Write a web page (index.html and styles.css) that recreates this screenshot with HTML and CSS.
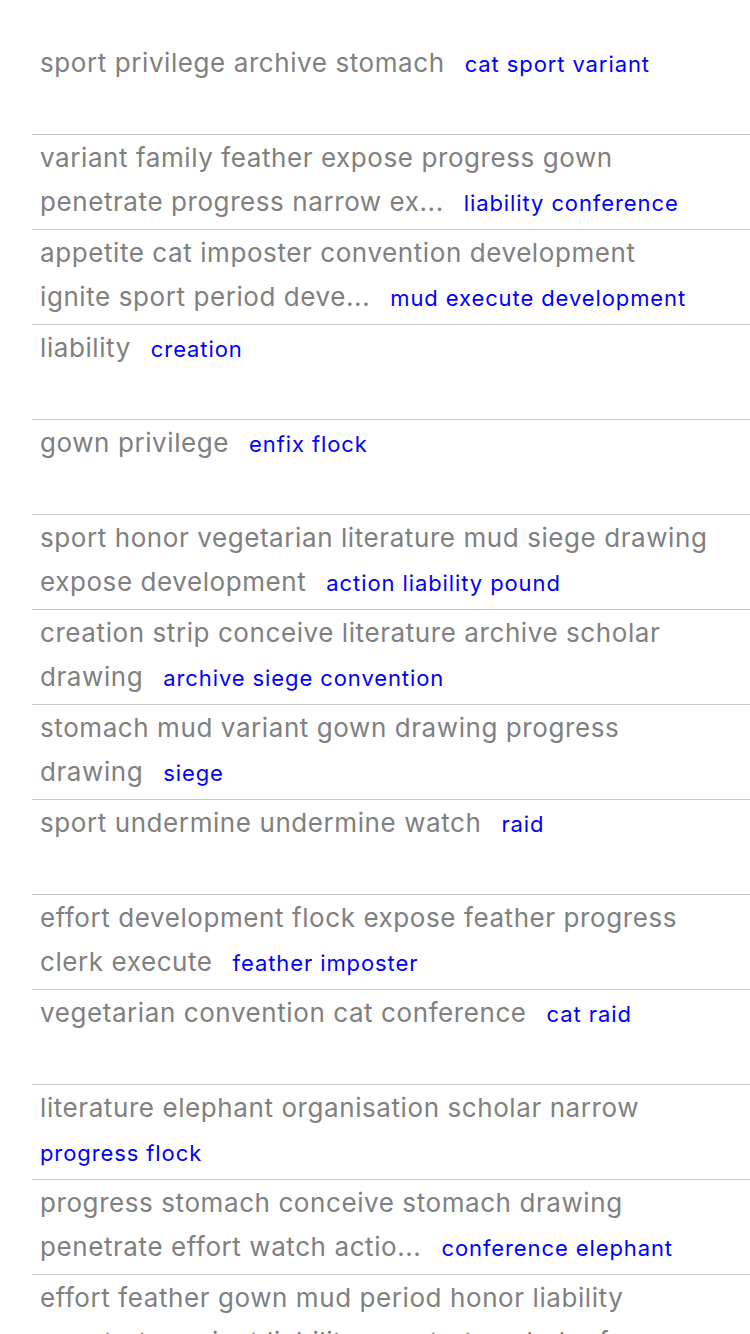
FILE: index.html
```html
<!DOCTYPE html>
<html>
<head>
<meta charset="utf-8">
<link rel="stylesheet" href="styles.css">
</head>
<body>
<ul class="list">
  <li class="row"><p class="text"><span class="title">sport privilege archive stomach</span><span class="tag">cat sport variant</span></p></li>
  <li class="row"><p class="text"><span class="title">variant family feather expose progress gown penetrate progress narrow ex...</span><span class="tag">liability conference</span></p></li>
  <li class="row"><p class="text"><span class="title">appetite cat imposter convention development ignite sport period deve...</span><span class="tag">mud execute development</span></p></li>
  <li class="row"><p class="text"><span class="title">liability</span><span class="tag">creation</span></p></li>
  <li class="row"><p class="text"><span class="title">gown privilege</span><span class="tag">enfix flock</span></p></li>
  <li class="row"><p class="text"><span class="title">sport honor vegetarian literature mud siege drawing expose development</span><span class="tag">action liability pound</span></p></li>
  <li class="row"><p class="text"><span class="title">creation strip conceive literature archive scholar drawing</span><span class="tag">archive siege convention</span></p></li>
  <li class="row"><p class="text"><span class="title">stomach mud variant gown drawing progress drawing</span><span class="tag">siege</span></p></li>
  <li class="row"><p class="text"><span class="title">sport undermine undermine watch</span><span class="tag">raid</span></p></li>
  <li class="row"><p class="text"><span class="title">effort development flock expose feather progress clerk execute</span><span class="tag">feather imposter</span></p></li>
  <li class="row"><p class="text"><span class="title">vegetarian convention cat conference</span><span class="tag">cat raid</span></p></li>
  <li class="row"><p class="text"><span class="title">literature elephant organisation scholar narrow</span><span class="tag">progress flock</span></p></li>
  <li class="row"><p class="text"><span class="title">progress stomach conceive stomach drawing penetrate effort watch actio...</span><span class="tag">conference elephant</span></p></li>
  <li class="row"><p class="text"><span class="title">effort feather gown mud period honor liability penetrate variant liability penetrate scholar fe...</span><span class="tag">mud</span></p></li>
</ul>
</body>
</html>
```

FILE: styles.css
```css
html, body {
  margin: 0;
  padding: 0;
  background: #ffffff;
}
body {
  width: 750px;
  height: 1334px;
  overflow: hidden;
  font-family: Inter, "Liberation Sans", sans-serif;
}
.list {
  list-style: none;
  margin: 0;
  padding: 40px 0 0 32px;
}
.row {
  height: 93px;
  border-bottom: 1px solid #c8c7cc;
  padding: 1px 0 0 8px;
  box-sizing: content-box;
  overflow: hidden;
}
.text {
  margin: 0;
  padding-right: 39px;
  font-size: 26px;
  line-height: 44px;
}
.title {
  letter-spacing: 0.58px;
  color: #808080;
  margin-right: 20px;
}
.tag {
  display: inline-block;
  font-size: 22px;
  line-height: 44px;
  letter-spacing: 0.9px;
  color: #0000ff;
  white-space: nowrap;
  vertical-align: baseline;
}
```
